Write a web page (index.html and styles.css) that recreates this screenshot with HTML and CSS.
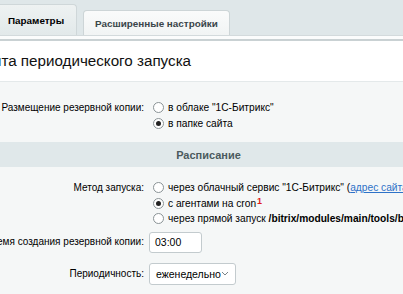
FILE: index.html
```html
<!DOCTYPE html>
<html lang="ru">
<head>
<meta charset="utf-8">
<link rel="stylesheet" href="styles.css">
</head>
<body>
<div class="tabs">
  <div class="tab tab-active">Параметры</div>
  <div class="tab">Расширенные настройки</div>
</div>
<div class="tabs-line"></div>
<div class="title-box">
  <div class="title">нта периодического запуска</div>
</div>
<div class="form">
  <div class="row row-first">
    <div class="lbl">Размещение резервной копии:</div>
    <div class="ctl">
      <label class="opt"><span class="radio"></span>в облаке "1С-Битрикс"</label>
      <label class="opt"><span class="radio checked"></span>в папке сайта</label>
    </div>
  </div>
  <div class="section">Расписание</div>
  <div class="row row-method">
    <div class="lbl">Метод запуска:</div>
    <div class="ctl">
      <label class="opt"><span class="radio"></span>через облачный сервис "1С-Битрикс" (<a class="link" href="#">адрес сайта</a>)</label>
      <label class="opt"><span class="radio checked"></span>с агентами на cron<sup class="note">1</sup></label>
      <label class="opt"><span class="radio"></span>через прямой запуск&nbsp;<b>/bitrix/modules/main/tools/backup.php</b></label>
    </div>
  </div>
  <div class="row row-field row-time">
    <div class="lbl">Время создания резервной копии:</div>
    <div class="ctl"><div class="input">03:00</div></div>
  </div>
  <div class="row row-field row-period">
    <div class="lbl">Периодичность:</div>
    <div class="ctl">
      <div class="select">еженедельно
        <svg class="chev" width="8" height="5" viewBox="0 0 8 5"><path d="M1 1l3 3 3-3" fill="none" stroke="#7a8488" stroke-width="1"/></svg>
      </div>
    </div>
  </div>
</div>
</body>
</html>
```
FILE: styles.css
```css
html, body {
  margin: 0;
  padding: 0;
  overflow: hidden;
  width: 403px;
  height: 294px;
  background: #f5f7f7;
  font-family: "Liberation Sans", Arial, sans-serif;
  font-size: 10px;
  color: #000;
}
.tabs {
  height: 35px;
  background: #dfe7e9;
  display: flex;
  align-items: flex-end;
  gap: 6px;
  box-sizing: border-box;
}
.tab {
  box-sizing: border-box;
  height: 25px;
  padding: 0 11px;
  display: flex;
  align-items: center;
  font-weight: bold;
  font-size: 9.9px;
  color: #3a4549;
  background: linear-gradient(#fafbfb, #f1f4f4);
  border: 1px solid #cdd5d7;
  border-bottom: none;
  border-radius: 4px 4px 0 0;
}
.tab-active {
  margin-left: -10px;
  width: 87px;
  height: 31px;
  padding: 0 0 0 17px;
  color: #000;
  background: linear-gradient(#eef2f2, #e2e9ea);
  border-color: #cfd7d9;
}
.tabs-line {
  height: 6px;
  box-sizing: border-box;
  border-top: 1px solid #d3dadc;
  border-bottom: 2px solid #c9d1d3;
  background: #fbfcfc;
}
.title-box {
  background: #fff;
  height: 40px;
  border-bottom: 1px solid #e4e9ea;
  display: flex;
  align-items: center;
  overflow: hidden;
}
.title {
  font-size: 15.2px;
  white-space: nowrap;
  margin-left: -7px;
  padding-bottom: 1px;
  color: #111;
}
.form {
  padding-top: 18px;
}
.row {
  display: grid;
  grid-template-columns: 144px 1fr;
  column-gap: 5px;
  align-items: start;
}
.lbl {
  display: flex;
  justify-content: flex-end;
  white-space: nowrap;
  line-height: 15.5px;
}
.ctl {
  white-space: nowrap;
}
.opt {
  display: flex;
  align-items: center;
  height: 15.5px;
  line-height: 15px;
  font-size: 10.2px;
}
.radio {
  box-sizing: border-box;
  width: 11px;
  height: 11px;
  border: 1px solid #8a9396;
  border-radius: 50%;
  background: #fff;
  margin: 0 4px 0 4px;
  display: flex;
  align-items: center;
  justify-content: center;
  flex: none;
}
.radio.checked::after {
  content: "";
  width: 5px;
  height: 5px;
  border-radius: 50%;
  background: #222;
}
.section {
  margin-top: 11px;
  height: 25px;
  background: #e0e8ea;
  display: flex;
  align-items: center;
  justify-content: center;
  padding-left: 14px;
  font-weight: bold;
  font-size: 11px;
  color: #4b5a5e;
}
.row-method {
  margin-top: 13px;
}
.link {
  color: #2e72c8;
  text-decoration: underline;
}
.note {
  color: #e01818;
  font-weight: bold;
  font-size: 9px;
  vertical-align: top;
  line-height: 9px;
  margin-left: 1px;
  margin-top: -3px;
}
.row-field {
  align-items: center;
}
.row-time {
  margin-top: 5px;
}
.row-period {
  margin-top: 10px;
}
.input {
  box-sizing: border-box;
  width: 53px;
  height: 21px;
  border: 1px solid #c3cbce;
  border-radius: 3px;
  background: #fff;
  padding: 0 5px;
  display: flex;
  align-items: center;
  font-size: 10.5px;
}
.select {
  box-sizing: border-box;
  width: 87px;
  height: 22px;
  border: 1px solid #c3cbce;
  border-radius: 3px;
  background: #fff;
  padding: 0 6px 0 6px;
  display: flex;
  align-items: center;
  justify-content: space-between;
  font-size: 10.5px;
}
.chev {
  flex: none;
}
```
